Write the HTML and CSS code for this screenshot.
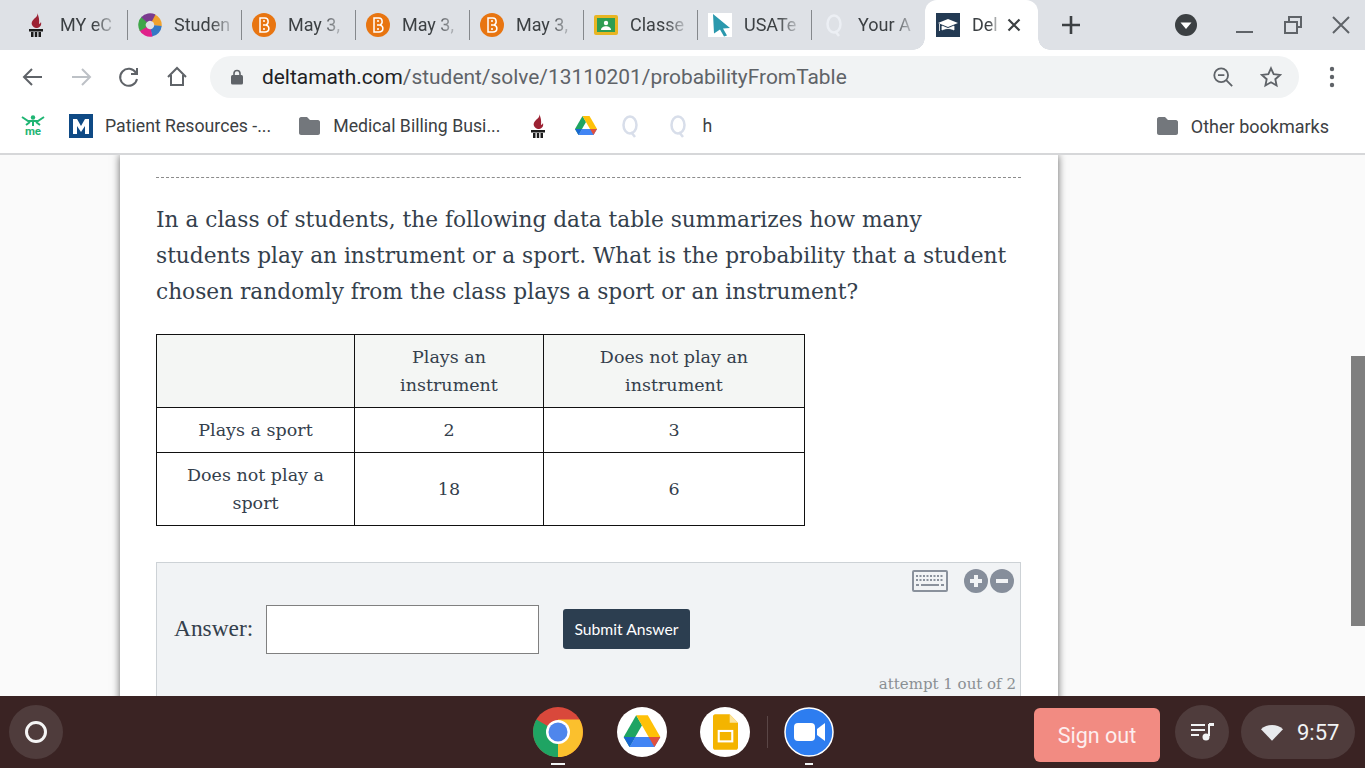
FILE: index.html
```html
<!DOCTYPE html>
<html lang="en">

<head>
  <meta charset="UTF-8">
  <meta name="viewport" content="width=device-width, initial-scale=1.0">
  <title>DeltaMath</title>
  <link rel="stylesheet" href="styles.css">
</head>

<body>

  <svg class="icon-defs" width="0" height="0">
    <defs>
      <symbol id="torch" viewBox="0 0 24 24">
        <path d="M13 0c1 3-1 4-3 6-2 2-3 4-2 6 1 2 3 3 4 3 3 0 6-2 5-6-.5 1-1.500 2-2 2 .5-4 0-8-2-11z" fill="#9c2233"/>
        <path d="M5 16h14v2.500H5zM7 19h2.500v5H7zM10.800 19h2.400v5h-2.400zM14.500 19H17v5h-2.500z" fill="#1c1c1c"/>
      </symbol>
      <symbol id="brightspace" viewBox="0 0 24 24">
        <circle cx="12" cy="12" r="12" fill="#e87511"/>
        <path d="M8 5h5c4 0 4 6 1 7 4 1 4 7-1 7H8zM11 8h2M11 12h2M11 16h2" fill="none" stroke="#fff" stroke-width="1.500"/>
      </symbol>
      <symbol id="multicolor" viewBox="0 0 24 24">
        <g fill="none" stroke-width="7.500">
          <circle cx="12" cy="12" r="8" pathLength="100" stroke-dasharray="21 79" stroke="#f0a12c" transform="rotate(-70 12 12)"/>
          <circle cx="12" cy="12" r="8" pathLength="100" stroke-dasharray="21 79" stroke="#3478c5" transform="rotate(5 12 12)"/>
          <circle cx="12" cy="12" r="8" pathLength="100" stroke-dasharray="21 79" stroke="#e0218a" transform="rotate(78 12 12)"/>
          <circle cx="12" cy="12" r="8" pathLength="100" stroke-dasharray="21 79" stroke="#3fa648" transform="rotate(150 12 12)"/>
          <circle cx="12" cy="12" r="8" pathLength="100" stroke-dasharray="21 79" stroke="#7a3b8f" transform="rotate(222 12 12)"/>
        </g>
      </symbol>
      <symbol id="classroom" viewBox="0 0 24 24">
        <rect width="24" height="20" y="2" rx="2" fill="#e8b522"/>
        <rect x="3" y="5" width="18" height="14" fill="#2e9d52"/>
        <circle cx="12" cy="10" r="2.200" fill="#fff"/>
        <path d="M7 17c0-5 10-5 10 0z" fill="#fff"/>
      </symbol>
      <symbol id="usatestprep" viewBox="0 0 24 24">
        <rect width="24" height="24" fill="#fff"/>
        <path d="M5 1l17 14-7 .5 4 7-3 1-4-7-6 4z" fill="#2a98ad"/>
      </symbol>
      <symbol id="quizlet" viewBox="0 0 24 24">
        <ellipse cx="12" cy="11" rx="6.500" ry="8.500" fill="none" stroke="currentColor" stroke-width="2.500"/>
        <path d="M13 18l4 5" stroke="currentColor" stroke-width="2.500"/>
      </symbol>
      <symbol id="cap" viewBox="0 0 24 24">
        <rect width="24" height="24" fill="#233a53"/>
        <path d="M12 6L2 10l10 4 10-4z" fill="#fff"/>
        <path d="M6 13v4c4-2 8-2 12 0v-4l-6 2.500zM3.500 11v7" fill="#fff" stroke="#fff" stroke-width=".8"/>
      </symbol>
      <symbol id="drive" viewBox="0 0 24 24">
        <path d="M8.500 2L1 15l3.500 6L12 8z" fill="#1fa463"/>
        <path d="M8.500 2h7L23 15h-7z" fill="#ffc107"/>
        <path d="M4.500 21L8 15h15l-3.500 6z" fill="#4285f4"/>
        <path d="M1 15h0l3.500 6L8 15z" fill="#1967d2"/>
        <path d="M16 15h7l-3.500 6z" fill="#e0503f"/>
      </symbol>
      <symbol id="folder" viewBox="0 0 24 24">
        <path d="M2 5c0-1 1-2 2-2h6l3 3h8c1 0 2 1 2 2v11c0 1-1 2-2 2H4c-1 0-2-1-2-2z" fill="#73777c"/>
      </symbol>
    </defs>
  </svg>

  <div class="tab-strip">
    <div class="tab">
      <svg class="favicon"><use href="#torch"/></svg>
      <span class="tab-title">MY eC</span>
    </div>
    <div class="tab">
      <svg class="favicon"><use href="#multicolor"/></svg>
      <span class="tab-title">Studen</span>
    </div>
    <div class="tab">
      <svg class="favicon"><use href="#brightspace"/></svg>
      <span class="tab-title">May 3,</span>
    </div>
    <div class="tab">
      <svg class="favicon"><use href="#brightspace"/></svg>
      <span class="tab-title">May 3,</span>
    </div>
    <div class="tab">
      <svg class="favicon"><use href="#brightspace"/></svg>
      <span class="tab-title">May 3,</span>
    </div>
    <div class="tab">
      <svg class="favicon"><use href="#classroom"/></svg>
      <span class="tab-title">Classe</span>
    </div>
    <div class="tab">
      <svg class="favicon"><use href="#usatestprep"/></svg>
      <span class="tab-title">USATe</span>
    </div>
    <div class="tab tab-last">
      <svg class="favicon quiz-faint"><use href="#quizlet"/></svg>
      <span class="tab-title">Your A</span>
    </div>
    <div class="tab-active">
      <svg class="favicon"><use href="#cap"/></svg>
      <span class="tab-title">Del</span>
      <svg class="tab-close" viewBox="0 0 14 14"><path d="M1.500 1.500l11 11M12.500 1.500l-11 11"/></svg>
    </div>
    <svg class="new-tab" viewBox="0 0 18 18"><path d="M9 0v18M0 9h18"/></svg>
    <div class="window-controls">
      <svg class="profile-menu" viewBox="0 0 22 22">
        <circle cx="11" cy="11" r="11" fill="#3c4043"/>
        <path d="M5.500 8.500h11L11 15z" fill="#fff"/>
      </svg>
      <svg class="win-btn" viewBox="0 0 18 18"><path class="win-line" d="M0 16h17"/></svg>
      <svg class="win-btn" viewBox="0 0 18 18"><path class="win-line" d="M5 5V1h12v10h-4M1 6h12v11H1z"/></svg>
      <svg class="win-btn" viewBox="0 0 18 18"><path class="win-line" d="M1 1l16 16M17 1L1 17"/></svg>
    </div>
  </div>

  <div class="toolbar">
    <svg class="tool-icon" viewBox="0 0 24 24"><path d="M21 12H4M11 4l-8 8 8 8"/></svg>
    <svg class="tool-icon tool-disabled" viewBox="0 0 24 24"><path d="M3 12h17M13 4l8 8-8 8"/></svg>
    <svg class="tool-icon" viewBox="0 0 24 24"><path d="M19 8a8.500 8.500 0 1 0 1 6M20 3v6h-6"/></svg>
    <svg class="tool-icon" viewBox="0 0 24 24"><path d="M3 12l9-9 9 9M6 10v10h12V10"/></svg>
    <div class="omnibox">
      <svg class="lock" viewBox="0 0 12 16">
        <path d="M3 7V4.500a3 3 0 0 1 6 0V7" fill="none" stroke="#5f6368" stroke-width="1.600"/>
        <rect y="6" width="12" height="9.500" rx="1.500" fill="#5f6368"/>
      </svg>
      <span class="url"><span class="url-host">deltamath.com</span>/student/solve/13110201/probabilityFromTable</span>
      <svg class="omni-icon" viewBox="0 0 24 24"><circle cx="10" cy="10" r="7.500"/><path d="M6.500 10h7M15.500 15.500L22 22"/></svg>
      <svg class="omni-icon" viewBox="0 0 24 24"><path d="M12 2.500l2.900 6.400 7 .8-5.200 4.700 1.400 6.900-6.100-3.500-6.100 3.500 1.400-6.900L2.100 9.700l7-.8z"/></svg>
    </div>
    <svg class="kebab" viewBox="0 0 6 22">
      <circle cx="3" cy="3" r="2.200"/><circle cx="3" cy="11" r="2.200"/><circle cx="3" cy="19" r="2.200"/>
    </svg>
  </div>

  <div class="bookmarks">
    <svg class="bm-icon" viewBox="0 0 24 24">
      <circle cx="12" cy="3.500" r="2.200" fill="#1fb573"/>
      <path d="M1 3l6 4h10l6-4M12 7v5M5 11l4-3M19 11l-4-3" stroke="#1fb573" stroke-width="2" fill="none"/>
      <text x="12" y="21" class="bm-me">me</text>
    </svg>
    <div class="bm-item">
      <svg class="bm-icon" viewBox="0 0 24 24">
        <rect width="24" height="24" fill="#0f4a85"/>
        <path d="M4 20V5h4l4 7 4-7h4v15h-4v-8l-4 6-4-6v8z" fill="#fff"/>
      </svg>
      <span>Patient Resources -...</span>
    </div>
    <div class="bm-item bm-pushed">
      <svg class="bm-icon"><use href="#folder"/></svg>
      <span>Medical Billing Busi...</span>
    </div>
    <svg class="bm-icon bm-pushed"><use href="#torch"/></svg>
    <svg class="bm-icon bm-tight"><use href="#drive"/></svg>
    <svg class="bm-icon quiz-pale"><use href="#quizlet"/></svg>
    <div class="bm-item">
      <svg class="bm-icon quiz-pale"><use href="#quizlet"/></svg>
      <span>h</span>
    </div>
    <div class="bm-item bm-other">
      <svg class="bm-icon"><use href="#folder"/></svg>
      <span>Other bookmarks</span>
    </div>
  </div>

  <div class="page">
    <div class="page-scroll">
      <div class="card">
        <div class="dashed"></div>
        <p class="problem">In a class of students, the following data table summarizes how many students play an instrument or a sport. What is the probability that a student chosen randomly from the class plays a sport or an instrument?</p>

        <table class="data-table">
          <tr class="head-row">
            <th></th>
            <th>Plays an<br>instrument</th>
            <th>Does not play an<br>instrument</th>
          </tr>
          <tr class="row-short">
            <td>Plays a sport</td>
            <td>2</td>
            <td>3</td>
          </tr>
          <tr>
            <td>Does not play a<br>sport</td>
            <td>18</td>
            <td>6</td>
          </tr>
        </table>

        <div class="answer-panel">
          <div class="panel-tools">
            <svg class="keyboard" viewBox="0 0 36 22">
              <rect x="1" y="1" width="34" height="20" rx="1" fill="none" stroke="#8a919c" stroke-width="2"/>
              <path d="M4 6h28M4 10h28" stroke="#8a919c" stroke-width="2" stroke-dasharray="2 1.500"/>
              <path d="M4 15h3M9 15h18M29 15h3" stroke="#8a919c" stroke-width="2"/>
            </svg>
            <svg class="round-btn" viewBox="0 0 24 24"><circle cx="12" cy="12" r="12"/><path d="M12 6v12M6 12h12"/></svg>
            <svg class="round-btn" viewBox="0 0 24 24"><circle cx="12" cy="12" r="12"/><path d="M6 12h12"/></svg>
          </div>
          <div class="answer-row">
            <label class="answer-label">Answer:</label>
            <input class="answer-input" type="text">
            <button class="submit-btn">Submit Answer</button>
          </div>
          <div class="attempt">attempt 1 out of 2</div>
        </div>
      </div>
    </div>
    <div class="scrollbar">
      <div class="scroll-thumb"></div>
    </div>
  </div>

  <div class="shelf">
    <div class="launcher"><span class="launcher-ring"></span></div>

    <div class="shelf-apps">
      <div class="app">
        <svg class="app-icon" viewBox="0 0 50 50">
          <circle cx="25" cy="25" r="25" fill="#d9483b"/>
          <path d="M25 25L3.400 12.500A25 25 0 0 0 25 50z" fill="#1fa463"/>
          <path d="M25 25V50A25 25 0 0 0 46.600 12.500H25z" fill="#fbc02d"/>
          <circle cx="25" cy="25" r="12" fill="#fff"/>
          <circle cx="25" cy="25" r="9.500" fill="#4f86ec"/>
        </svg>
        <span class="app-dot app-dot-wide"></span>
      </div>
      <div class="app">
        <div class="app-disc">
          <svg class="app-inner" viewBox="0 0 24 24"><use href="#drive"/></svg>
        </div>
      </div>
      <div class="app">
        <div class="app-disc">
          <svg class="app-slides" viewBox="0 0 24 34">
            <path d="M0 2c0-1 1-2 2-2h14l8 8v24c0 1-1 2-2 2H2c-1 0-2-1-2-2z" fill="#f4b400"/>
            <path d="M16 0l8 8h-8z" fill="#fbe39a"/>
            <rect x="5.500" y="16" width="13" height="10" fill="none" stroke="#fff" stroke-width="2"/>
          </svg>
        </div>
      </div>
      <div class="shelf-divider"></div>
      <div class="app">
        <svg class="app-icon" viewBox="0 0 50 50">
          <circle cx="25" cy="25" r="24" fill="#2d7df0" stroke="#fff" stroke-width="1.500"/>
          <rect x="10" y="16" width="21" height="18" rx="4" fill="#fff"/>
          <path d="M33 22l8-6v18l-8-6z" fill="#fff"/>
        </svg>
        <span class="app-dot"></span>
      </div>
    </div>

    <div class="tray">
      <button class="sign-out">Sign out</button>
      <div class="tray-pill tray-round">
        <svg class="tray-media" viewBox="0 0 24 20">
          <path d="M1 3h14M1 8h14M1 13h8" stroke="#f1f3f4" stroke-width="2"/>
          <path d="M19 2v12" stroke="#f1f3f4" stroke-width="2"/>
          <path d="M19 1h5v3h-5z" fill="#f1f3f4"/>
          <circle cx="16" cy="15" r="3.500" fill="#f1f3f4"/>
        </svg>
      </div>
      <div class="tray-pill tray-clock">
        <svg class="wifi" viewBox="0 0 24 18"><path d="M0 5.500a18 18 0 0 1 24 0L12 18z" fill="#e8eaed"/></svg>
        <span>9:57</span>
      </div>
    </div>
  </div>

</body>

</html>
```

FILE: styles.css
```css
* {
  box-sizing: border-box;
}

html,
body {
  height: 100%;
}

body {
  margin: 0;
  display: flex;
  flex-direction: column;
  overflow: hidden;
  font-family: 'Roboto', sans-serif;
  background-color: #fff;
}

.icon-defs {
  position: absolute;
}

/* Tab strip */
.tab-strip {
  display: flex;
  align-items: center;
  height: 50px;
  padding-left: 14px;
  background-color: #dee1e6;
  flex-shrink: 0;
}

.tab {
  display: flex;
  align-items: center;
  width: 114px;
  height: 30px;
  padding-left: 10px;
  border-right: 1px solid #85888c;
  color: #3c4043;
  font-size: 18px;
}

.tab-last {
  width: 113px;
  border-right: none;
}

.tab-active {
  position: relative;
  display: flex;
  align-items: center;
  align-self: flex-end;
  width: 113px;
  height: 50px;
  padding: 0 17px 0 11px;
  background-color: #fff;
  border-radius: 12px 12px 0 0;
  color: #3c4043;
  font-size: 18px;
}

/* concave corners at the foot of the active tab */
.tab-active::before,
.tab-active::after {
  content: "";
  position: absolute;
  bottom: 0;
  width: 12px;
  height: 12px;
}

.tab-active::before {
  left: -12px;
  background: radial-gradient(circle at 0 0, transparent 11.5px, #fff 12px);
}

.tab-active::after {
  right: -12px;
  background: radial-gradient(circle at 100% 0, transparent 11.5px, #fff 12px);
}

.favicon {
  width: 24px;
  height: 24px;
  flex-shrink: 0;
}

.quiz-faint {
  color: #eceff4;
}

.tab-title {
  margin-left: 12px;
  margin-bottom: 1px;
  white-space: nowrap;
  -webkit-mask-image: linear-gradient(to right, #000 65%, rgba(0, 0, 0, 0.25) 100%);
  mask-image: linear-gradient(to right, #000 65%, rgba(0, 0, 0, 0.25) 100%);
}

.tab-close {
  width: 14px;
  height: 14px;
  margin-left: auto;
  fill: none;
  stroke: #3c4043;
  stroke-width: 2.2;
}

.new-tab {
  width: 18px;
  height: 18px;
  margin-left: 24px;
  fill: none;
  stroke: #3c4043;
  stroke-width: 2.6;
}

.window-controls {
  display: flex;
  align-items: center;
  margin-left: auto;
  padding-right: 15px;
}

.profile-menu {
  width: 22px;
  height: 22px;
  margin-right: 39px;
}

.win-btn {
  width: 18px;
  height: 18px;
  margin-left: 30px;
  fill: none;
}

.profile-menu + .win-btn {
  margin-left: 0;
}

.win-line {
  stroke: #5f6368;
  stroke-width: 2;
  fill: none;
}

/* Toolbar */
.toolbar {
  display: flex;
  align-items: center;
  height: 54px;
  padding: 0 21px 0 21px;
  flex-shrink: 0;
}

.tool-icon {
  width: 24px;
  height: 24px;
  margin-right: 24px;
  fill: none;
  stroke: #5f6368;
  stroke-width: 2;
}

.tool-disabled {
  stroke: #bdc1c6;
}

.omnibox {
  display: flex;
  align-items: center;
  width: 1089px;
  height: 42px;
  margin-left: -3px;
  padding: 0 17px 0 21px;
  background-color: #f1f3f4;
  border-radius: 21px;
}

.lock {
  width: 12px;
  height: 16px;
}

.url {
  margin-left: 19px;
  color: #5f6368;
  font-size: 20.9px;
  white-space: nowrap;
}

.url-host {
  color: #202124;
}

.omni-icon {
  width: 22px;
  height: 22px;
  margin-left: 26px;
  fill: none;
  stroke: #5f6368;
  stroke-width: 2;
}

.url + .omni-icon {
  margin-left: auto;
}

.kebab {
  width: 6px;
  height: 22px;
  margin-left: 30px;
  fill: #5f6368;
}

/* Bookmarks */
.bookmarks {
  display: flex;
  align-items: center;
  gap: 24px;
  height: 51px;
  padding: 0 36px 5px 21px;
  border-bottom: 2px solid #d6d7d9;
  color: #3c4043;
  font-size: 17.7px;
  flex-shrink: 0;
}

.bm-icon {
  width: 24px;
  height: 24px;
  flex-shrink: 0;
}

.bm-pushed {
  margin-left: 2px;
}

.bm-tight {
  margin-right: -4px;
}

.quiz-pale {
  color: #d8deea;
}

.bm-me {
  font-family: 'Roboto', sans-serif;
  font-size: 11.5px;
  font-weight: 700;
  text-anchor: middle;
  fill: #1fb573;
}

.bm-item {
  display: flex;
  align-items: center;
  gap: 12px;
  white-space: nowrap;
}

.bm-other {
  margin-left: auto;
  font-size: 18px;
}

/* Page area */
.page {
  display: flex;
  flex: 1;
  min-height: 0;
  background-color: #fafafa;
}

.page-scroll {
  flex: 1;
  min-width: 0;
  overflow: hidden;
  padding-left: 120px;
}

.card {
  width: 938px;
  min-height: 700px;
  padding: 22px 37px 0 36px;
  background-color: #fff;
  box-shadow: 0 0 8px rgba(0, 0, 0, 0.6);
  color: #34404c;
  font-family: 'DejaVu Serif', serif;
}

.dashed {
  border-top: 1px dashed #8c8c8c;
}

.problem {
  margin: 24px 0 24px;
  font-size: 21.7px;
  line-height: 36px;
}

.data-table {
  width: 649px;
  border-collapse: collapse;
  table-layout: fixed;
  font-size: 17.5px;
  line-height: 28px;
  text-align: center;
}

.data-table th,
.data-table td {
  border: 1px solid #111;
  padding: 8px 10px;
  font-weight: normal;
}

.data-table th:nth-child(1) {
  width: 198px;
}

.data-table th:nth-child(2) {
  width: 189px;
}

.head-row th {
  background-color: #f4f6f4;
}

.answer-panel {
  margin-top: 36px;
  padding: 6px 4px 0 18px;
  height: 160px;
  background-color: #f1f3f5;
  border: 1px solid #cdd2d6;
}

.panel-tools {
  display: flex;
  align-items: center;
  justify-content: flex-end;
  gap: 2px;
  padding-right: 2px;
}

.keyboard {
  width: 36px;
  height: 22px;
  margin-right: 14px;
}

.round-btn {
  width: 24px;
  height: 24px;
  fill: #868e9b;
}

.round-btn path {
  stroke: #f1f3f5;
  stroke-width: 4;
}

.answer-row {
  display: flex;
  align-items: center;
  margin-top: 12px;
  margin-left: -1px;
}

.answer-label {
  width: 92px;
  margin-bottom: 3px;
  font-family: 'Liberation Serif', serif;
  font-size: 23.4px;
}

.answer-input {
  width: 273px;
  height: 49px;
  background-color: #fff;
  border: 1px solid #808080;
}

.submit-btn {
  width: 127px;
  height: 40px;
  margin-left: 24px;
  margin-bottom: 2px;
  background-color: #2c3e50;
  border: none;
  border-radius: 3px;
  color: #fff;
  font-family: 'Lato', sans-serif;
  font-size: 15.7px;
}

.attempt {
  margin-top: 21px;
  color: #8a8f93;
  font-size: 15px;
  text-align: right;
}

.scrollbar {
  width: 14px;
  background-color: #fafafa;
  flex-shrink: 0;
}

.scroll-thumb {
  height: 270px;
  margin-top: 201px;
  background-color: #7f7f7f;
}

/* Shelf */
.shelf {
  display: flex;
  align-items: center;
  height: 72px;
  background-color: #3a2323;
  flex-shrink: 0;
}

.launcher {
  display: flex;
  align-items: center;
  justify-content: center;
  width: 54px;
  height: 54px;
  margin-left: 9px;
  background-color: #4f3c3c;
  border-radius: 50%;
}

.launcher-ring {
  width: 22px;
  height: 22px;
  border: 3px solid #f5f5f5;
  border-radius: 50%;
}

.shelf-apps {
  display: flex;
  align-items: center;
  margin-left: 470px;
}

.app {
  position: relative;
  display: flex;
  justify-content: center;
  width: 50px;
  margin-right: 33.5px;
}

.app:last-child {
  margin-right: 0;
}

.app-icon {
  width: 50px;
  height: 50px;
}

.app-disc {
  display: flex;
  align-items: center;
  justify-content: center;
  width: 50px;
  height: 50px;
  background-color: #fff;
  border-radius: 50%;
}

.app-inner {
  width: 40px;
  height: 40px;
}

.app-slides {
  width: 25px;
  height: 36px;
}

.app-dot {
  position: absolute;
  left: 21px;
  top: 56px;
  width: 8px;
  height: 2px;
  background-color: #f1f3f4;
}

.app-dot-wide {
  left: 18px;
  width: 14px;
}

.shelf-divider {
  width: 1px;
  height: 32px;
  margin: 0 16px 0 -17px;
  background-color: #5a4646;
}

.tray {
  display: flex;
  align-items: center;
  margin-left: auto;
  padding-right: 10px;
}

.sign-out {
  width: 126px;
  height: 54px;
  margin-top: 6px;
  background-color: #f28b82;
  border: none;
  border-radius: 6px;
  color: #fdeeee;
  font-family: 'Roboto', sans-serif;
  font-size: 21.5px;
}

.tray-pill {
  display: flex;
  align-items: center;
  justify-content: center;
  height: 54px;
  background-color: #4f3c3c;
  border-radius: 27px;
  color: #f1f3f4;
  font-size: 22px;
}

.tray-round {
  width: 54px;
  margin-left: 15px;
}

.tray-media {
  width: 24px;
  height: 20px;
  fill: none;
}

.tray-clock {
  width: 114px;
  margin-left: 12px;
  padding-left: 20px;
  justify-content: flex-start;
  gap: 14px;
}

.wifi {
  width: 22px;
  height: 17px;
}
```
